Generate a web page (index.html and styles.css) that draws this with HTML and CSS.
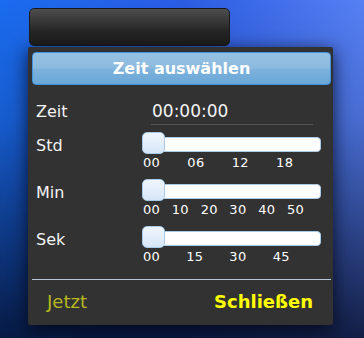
FILE: index.html
```html
<!DOCTYPE html>
<html lang="de">
<head>
    <meta charset="UTF-8">
    <meta name="viewport" content="width=device-width, initial-scale=1.0">
    <title>Zeit auswählen</title>
    <link rel="stylesheet" href="styles.css">
</head>
<body>
    <div class="time-input"></div>

    <div class="picker">
        <div class="picker-header">Zeit auswählen</div>

        <div class="picker-body">
            <div class="row row-time">
                <div class="row-label">Zeit</div>
                <div class="time-value">00:00:00</div>
            </div>

            <div class="row">
                <div class="row-label slider-label">Std</div>
                <div class="slider">
                    <div class="slider-track"><div class="slider-thumb"></div></div>
                    <div class="slider-scale">
                        <span style="left: 0%">00</span>
                        <span style="left: 26.1%">06</span>
                        <span style="left: 52.2%">12</span>
                        <span style="left: 78.3%">18</span>
                    </div>
                </div>
            </div>

            <div class="row">
                <div class="row-label slider-label">Min</div>
                <div class="slider">
                    <div class="slider-track"><div class="slider-thumb"></div></div>
                    <div class="slider-scale">
                        <span style="left: 0%">00</span>
                        <span style="left: 16.9%">10</span>
                        <span style="left: 33.9%">20</span>
                        <span style="left: 50.8%">30</span>
                        <span style="left: 67.8%">40</span>
                        <span style="left: 84.7%">50</span>
                    </div>
                </div>
            </div>

            <div class="row">
                <div class="row-label slider-label">Sek</div>
                <div class="slider">
                    <div class="slider-track"><div class="slider-thumb"></div></div>
                    <div class="slider-scale">
                        <span style="left: 0%">00</span>
                        <span style="left: 25.4%">15</span>
                        <span style="left: 50.8%">30</span>
                        <span style="left: 76.3%">45</span>
                    </div>
                </div>
            </div>
        </div>

        <div class="picker-footer">
            <button class="btn-now">Jetzt</button>
            <button class="btn-close">Schließen</button>
        </div>
    </div>
</body>
</html>
```

FILE: styles.css
```css
html, body {
    height: 100%;
}

body {
    margin: 0;
    padding-top: 8px;
    box-sizing: border-box;
    font-family: "DejaVu Sans", Verdana, sans-serif;
    background:
        linear-gradient(to bottom, rgba(0,0,0,0) 0%, rgba(0,0,10,0.15) 35%, rgba(2,6,25,0.8) 100%),
        linear-gradient(to right, #1a6cf0 0%, #2a5ce2 50%, #5680f4 100%);
    overflow: hidden;
}

.time-input {
    margin-left: 29px;
    width: 199px;
    height: 36px;
    background: linear-gradient(to bottom, #4e4e4e 0%, #3a3a3a 30%, #242424 65%, #1e1e1e 100%);
    border: 1px solid #1a1a1a;
    border-radius: 5px;
}

.picker {
    margin-top: 1px;
    margin-left: 28px;
    width: 305px;
    box-sizing: border-box;
    padding: 5px 2px 11px 4px;
    background: #323232;
    border-radius: 2px;
    box-shadow: 0 4px 18px rgba(0,0,10,0.75);
}

.picker-header {
    height: 31px;
    line-height: 31px;
    text-align: center;
    color: white;
    font-size: 16px;
    font-weight: bold;
    background: linear-gradient(to bottom, #96c2e2 0%, #8cbade 48%, #7db2dc 52%, #6aa7d8 100%);
    border: 1px solid #3f94e2;
    border-radius: 4px;
}

.picker-body {
    padding: 16px 0 15px 4px;
}

.row {
    display: grid;
    grid-template-columns: 106px 179px;
    margin-top: 9px;
}

.row-time {
    margin-top: 0;
    align-items: baseline;
}

.row-time + .row {
    margin-top: 7px;
}

.row-label {
    color: #f4f4f4;
    font-size: 16px;
    line-height: 20px;
}

.slider-label {
    line-height: 22px;
    padding-top: 3px;
}

.time-value {
    margin-left: 9px;
    width: 161px;
    padding-left: 1px;
    padding-bottom: 3px;
    color: #f4f4f4;
    font-size: 17px;
    line-height: 20px;
    border-bottom: 1px solid #565656;
}

.slider-track {
    position: relative;
    height: 13px;
    margin-top: 5px;
    margin-bottom: 4px;
    background: white;
    border: 1px solid #a9cbe8;
    border-radius: 4px;
}

.slider-thumb {
    position: absolute;
    left: -1px;
    top: -6px;
    width: 21px;
    height: 20px;
    background: linear-gradient(to bottom, #eef5fd 0%, #e4eefa 50%, #d6e6f7 100%);
    border: 1px solid #a9cbe8;
    border-radius: 5px;
}

.slider-scale {
    position: relative;
    height: 14px;
    margin-top: 1px;
    margin-left: 1px;
    width: 170px;
}

.slider-scale span {
    position: absolute;
    top: 0;
    color: #ffffff;
    font-size: 13px;
    line-height: 14px;
    letter-spacing: 0.3px;
}

.picker-footer {
    display: flex;
    justify-content: space-between;
    align-items: center;
    border-top: 1px solid #b6c6dc;
    padding: 10px 18px 0 15px;
}

.picker-footer button {
    background: none;
    border: none;
    padding: 0;
    font-family: "DejaVu Sans", Verdana, sans-serif;
    font-size: 18px;
    line-height: 24px;
    cursor: pointer;
}

.btn-now {
    color: #b8b820;
}

.btn-close {
    color: #ffff00;
    font-weight: bold;
}
```
